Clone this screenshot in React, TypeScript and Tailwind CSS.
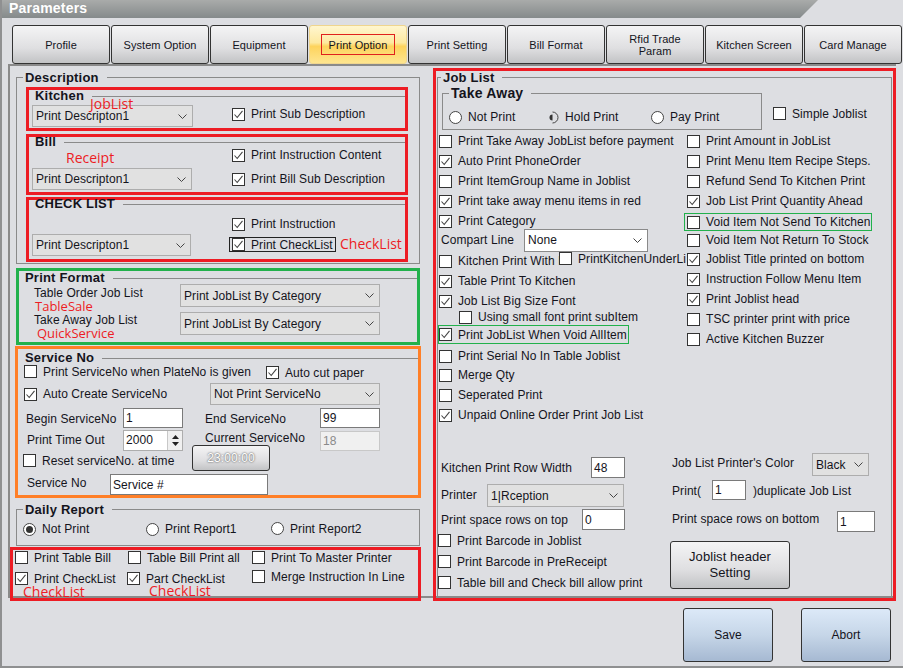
import type { ReactNode } from 'react';

const tabs = ['Profile', 'System Option', 'Equipment', 'Print Option', 'Print Setting', 'Bill Format', 'Rfid Trade Param', 'Kitchen Screen', 'Card Manage'];

const Check = ({ label, checked, className = '' }: { label?: string; checked?: boolean; className?: string }) => (
    <div className={`flex items-center whitespace-nowrap ${className}`}>
        <span className="w-[13px] h-[13px] shrink-0 bg-white border border-[#333] flex items-center justify-center">
            {checked && (
                <svg width="11" height="11" viewBox="0 0 11 11" fill="none">
                    <path d="M1.5 5.5 L4.2 8.5 L9.5 1.8" stroke="#444" strokeWidth="1.1" />
                </svg>
            )}
        </span>
        {label && <span className="ml-[6px]">{label}</span>}
    </div>
);

const Radio = ({ label, checked, className = '' }: { label: string; checked?: boolean; className?: string }) => (
    <div className={`flex items-center whitespace-nowrap ${className}`}>
        <span className="w-[13px] h-[13px] shrink-0 rounded-full bg-white border border-[#444] flex items-center justify-center">
            {checked && <span className="w-[7px] h-[7px] rounded-full bg-[#333]" />}
        </span>
        <span className="ml-[6px]">{label}</span>
    </div>
);

const Chevron = () => (
    <svg width="9" height="5" viewBox="0 0 9 5" fill="none" className="shrink-0">
        <path d="M0.5 0.5 L4.5 4.5 L8.5 0.5" stroke="#444" strokeWidth="1" />
    </svg>
);

const Select = ({ value, className = '', white }: { value: string; className?: string; white?: boolean }) => (
    <div className={`flex items-center justify-between shrink-0 pl-[3px] pr-[5px] border whitespace-nowrap ${white ? 'bg-white border-[#8a8a8a]' : 'bg-[#e1e1e1] border-[#adadad]'} ${className}`}>
        <span>{value}</span>
        <Chevron />
    </div>
);

const Field = ({ value, className = '', disabled }: { value: string; className?: string; disabled?: boolean }) => (
    <div className={`flex items-center shrink-0 pl-[2px] border ${disabled ? 'bg-[#f0f0f0] border-[#c8c8c8] text-[#8a8a8a]' : 'bg-white border-[#7a7a7a]'} ${className}`}>
        {value}
    </div>
);

const Title = ({ text, className = '' }: { text: string; className?: string }) => (
    <div className={`flex items-center h-[10px] ${className}`}>
        <span className="font-bold text-[13px] tracking-[0.2px] whitespace-nowrap">{text}</span>
        <span className="flex-1 h-px bg-[#8a8a8a] ml-[8px]" />
    </div>
);

const Group = ({ title, className = '', legend = 'ml-[6px]', big, children }: { title: string; className?: string; legend?: string; big?: boolean; children: ReactNode }) => (
    <fieldset className={`border border-[#8a8a8a] ${className}`}>
        <legend className={`pl-[2px] pr-[8px] h-[16px] font-bold tracking-[0.2px] ${big ? 'text-[14px] leading-[16px]' : 'text-[13px] leading-[18px]'} ${legend}`}>{title}</legend>
        {children}
    </fieldset>
);

const Note = ({ text, className = '' }: { text: string; className?: string }) => (
    <span className={`absolute leading-[16px] tracking-normal text-[#ed1c24] whitespace-nowrap font-['Open_Sans',sans-serif] font-normal ${className}`}>{text}</span>
);

const Tab = ({ text, active, className = '' }: { text: string; active?: boolean; className?: string }) => (
    <div className={`w-[98px] h-[39px] flex items-center justify-center text-center rounded-[3px] border text-[11px] leading-[12px] ${active ? 'bg-[linear-gradient(#fff6cf,#fde9a0_45%,#fdd35c_55%,#fee58f)] border-[#efd58e]' : 'bg-[linear-gradient(#f4f4f5,#dfdfe1_60%,#c2c3c5)] border-[#333]'} ${className}`}>
        {active ? <span className="px-[7px] h-[21px] flex items-center border border-[#e0201c]">{text}</span> : text}
    </div>
);

const leftRows: { label: string; checked?: boolean }[] = [
    { label: 'Print Take Away JobList before payment' },
    { label: 'Auto Print PhoneOrder', checked: true },
    { label: 'Print ItemGroup Name in Joblist' },
    { label: 'Print take away menu items in red', checked: true },
    { label: 'Print Category', checked: true },
];

const rightRows: { label: string; checked?: boolean; className: string }[] = [
    { label: 'Void Item Not Return To Stock', className: 'h-[20px] -mt-px' },
    { label: 'Joblist Title printed on bottom', checked: true, className: 'h-[20px] -mt-px' },
    { label: 'Instruction Follow Menu Item', checked: true, className: 'h-[20px]' },
    { label: 'Print Joblist head', checked: true, className: 'h-[20px]' },
    { label: 'TSC printer print with price', className: 'h-[20px]' },
    { label: 'Active Kitchen Buzzer', className: 'h-[20px]' },
];

export default function App() {
    return (
        <div className="relative w-[903px] h-[668px] overflow-hidden bg-[#dddee2] text-[12px] leading-[14px] tracking-[0.07px] text-[#14141c] font-['Liberation_Sans',sans-serif]">
            {/* Title bar */}
            <div className="h-[18px] pl-[9px] font-bold text-[14px] tracking-[0.2px] leading-[17px] text-white bg-[linear-gradient(#a9abaa,#858a8b)] [clip-path:polygon(0_0,818px_0,800px_100%,0_100%)]">
                Parameters
            </div>

            {/* Tabs */}
            <div className="flex gap-px ml-[12px] mt-[7px]">
                {tabs.map((tab, i) => (
                    <Tab key={tab} text={tab} active={i === 3} className={i === 6 ? 'px-[20px]' : i === 8 ? 'w-[86px]' : ''} />
                ))}
            </div>

            {/* Main panel */}
            <div className="ml-[8px] w-[888px] h-[534px] border-l-2 border-t-2 border-b-2 border-[#8a8a8a] flex">
                {/* Left column */}
                <div className="w-[412px] shrink-0">
                    <Group title="Description" className="mt-[3px] ml-[6px] w-[404px] pb-px">
                        <div className="relative mt-[2px] ml-[9px] w-[382px] h-[44px] border-[3px] border-[#ed1c24]">
                            <Title text="Kitchen" className="pl-[6px] relative top-px" />
                            <div className="flex mt-[5px] ml-[3px]">
                                <Select value="Print Descripton1" className="w-[161px] h-[22px]" />
                                <Check label="Print Sub Description" checked className="ml-[39px] h-[14px] mt-[2px]" />
                            </div>
                            <Note text="JobList" className="text-[14px] left-[61px] top-[6px]" />
                        </div>
                        <div className="relative mt-[3px] ml-[9px] w-[382px] h-[61px] border-[3px] border-[#ed1c24]">
                            <Title text="Bill" className="pl-[6px]" />
                            <div className="flex ml-[3px]">
                                <Select value="Print Descripton1" className="w-[160px] h-[22px] mt-[21px]" />
                                <div className="ml-[40px] mt-px flex flex-col gap-[10px]">
                                    <Check label="Print Instruction Content" checked className="h-[14px]" />
                                    <Check label="Print Bill Sub Description" checked className="h-[14px]" />
                                </div>
                            </div>
                            <Note text="Receipt" className="text-[14px] left-[37px] top-[13px]" />
                        </div>
                        <div className="relative mt-[2px] ml-[9px] w-[382px] h-[65px] border-[3px] border-[#ed1c24]">
                            <Title text="CHECK LIST" className="pl-[6px] -mt-px" />
                            <div className="flex ml-[3px]">
                                <Select value="Print Descripton1" className="w-[159px] h-[22px] mt-[25px]" />
                                <div className="ml-[41px] mt-[8px] flex flex-col gap-[6px]">
                                    <Check label="Print Instruction" checked className="h-[14px]" />
                                    <Check label="Print CheckList" checked className="h-[15px] w-[107px] -ml-[3px] pl-[2px] border border-[#222]" />
                                </div>
                            </div>
                            <Note text="CheckList" className="text-[14px] left-[311px] top-[36px]" />
                        </div>
                    </Group>

                    <div className="relative mt-[4px] ml-[6px] w-[404px] h-[77px] border-[3px] border-[#22b14c]">
                        <Title text="Print Format" className="pl-[6px] mt-px relative top-px" />
                        <div className="flex mt-[2px]">
                            <span className="ml-[15px] w-[146px] leading-[18px]">Table Order Job List</span>
                            <Select value="Print JobList By Category" className="w-[200px] h-[23px]" />
                        </div>
                        <div className="flex mt-[5px]">
                            <span className="ml-[15px] w-[146px] leading-[16px]">Take Away Job List</span>
                            <Select value="Print JobList By Category" className="w-[200px] h-[23px]" />
                        </div>
                        <Note text="TableSale" className="text-[13px] left-[16px] top-[27px]" />
                        <Note text="QuickService" className="text-[13px] left-[18px] top-[54px]" />
                    </div>

                    <div className="mt-[1px] ml-[5px] w-[406px] h-[152px] border-[3px] border-[#ff7f27]">
                        <Title text="Service No" className="pl-[7px] mt-[2px] relative top-[2px]" />
                        <div className="flex mt-[5px] ml-[6px]">
                            <Check label="Print ServiceNo when PlateNo is given" className="w-[242px] h-[13px] -mt-px" />
                            <Check label="Auto cut paper" checked className="h-[13px]" />
                        </div>
                        <div className="flex items-center mt-[4px] ml-[6px]">
                            <Check label="Auto Create ServiceNo" checked className="w-[186px] h-[13px]" />
                            <Select value="Not Print ServiceNo" className="w-[170px] h-[22px]" />
                        </div>
                        <div className="flex items-center mt-[3px] ml-[8px] h-[20px]">
                            <span className="w-[97px] pt-px">Begin ServiceNo</span>
                            <Field value="1" className="w-[60px] h-[20px]" />
                            <span className="ml-[22px] w-[115px] pt-px">End ServiceNo</span>
                            <Field value="99" className="w-[60px] h-[20px]" />
                        </div>
                        <div className="flex mt-[2px] ml-[9px] h-[21px]">
                            <span className="w-[96px] leading-[20px]">Print Time Out</span>
                            <div className="relative w-[60px] h-[21px] border border-[#adadad] bg-white pl-[2px] leading-[19px]">
                                2000
                                <div className="absolute right-0 top-0 w-[15px] h-[19px] flex flex-col items-center justify-center gap-[3px] bg-[#f0f0f0] border-l border-[#c8c8c8]">
                                    <svg width="7" height="4" viewBox="0 0 7 4"><path d="M3.5 0 L7 4 L0 4 Z" fill="#222" /></svg>
                                    <svg width="7" height="4" viewBox="0 0 7 4"><path d="M0 0 L7 0 L3.5 4 Z" fill="#222" /></svg>
                                </div>
                            </div>
                            <span className="ml-[22px] w-[115px] leading-[16px]">Current ServiceNo</span>
                            <Field value="18" disabled className="w-[60px] h-[20px] mt-px" />
                        </div>
                        <div className="flex -mt-[6px] ml-[5px] h-[26px]">
                            <Check label="Reset serviceNo. at time" className="w-[169px] h-[13px] mt-[9px]" />
                            <div className="w-[78px] h-[26px] flex items-center justify-center rounded-[3px] border border-[#333] text-white [text-shadow:0_0_2px_#222] bg-[linear-gradient(#f4f4f5,#dfdfe1_60%,#c2c3c5)]">23:00:00</div>
                        </div>
                        <div className="flex items-center mt-[3px] ml-[9px] h-[21px]">
                            <span className="w-[83px] -mt-[4px]">Service No</span>
                            <Field value="Service #" className="w-[158px] h-[21px]" />
                        </div>
                    </div>

                    <Group title="Daily Report" className="mt-[3px] ml-[6px] w-[404px] h-[45px]">
                        <div className="flex mt-[5px] ml-[6px]">
                            <Radio label="Not Print" checked className="w-[123px]" />
                            <Radio label="Print Report1" className="w-[125px]" />
                            <Radio label="Print Report2" className="-mt-px" />
                        </div>
                    </Group>

                    <div className="relative mt-px w-[411px] h-[54px] border-[3px] border-[#ed1c24] flex pl-[2px] pt-px">
                        <div className="w-[113px] flex flex-col gap-[8px]">
                            <Check label="Print Table Bill" className="h-[13px]" />
                            <Check label="Print CheckList" checked className="h-[13px]" />
                        </div>
                        <div className="w-[124px] flex flex-col gap-[8px]">
                            <Check label="Table Bill Print all" className="h-[13px]" />
                            <Check label="Part CheckList" checked className="h-[13px] -ml-px" />
                        </div>
                        <div className="flex flex-col gap-[6px]">
                            <Check label="Print To Master Printer" className="h-[13px]" />
                            <Check label="Merge Instruction In Line" className="h-[13px]" />
                        </div>
                        <Note text="CheckList" className="text-[14px] left-[10px] top-[34px]" />
                        <Note text="CheckList" className="text-[14px] left-[136px] top-[33px]" />
                    </div>
                </div>

                {/* Right column */}
                <div className="relative ml-[11px] mt-[2px] w-[463px] h-[533px] shrink-0 border-[3px] border-[#ed1c24]">
                    <Group title="Job List" legend="ml-[3px]" className="-mt-[2px] ml-px w-[455px] h-[528px]">
                        <div className="flex">
                            <Group title="Take Away" big legend="ml-[6px]" className="ml-[4px] w-[320px] h-[45px]">
                                <div className="flex mt-[9px] ml-[6px]">
                                    <Radio label="Not Print" className="w-[97px]" />
                                    <div className="flex items-center w-[105px]">
                                        <svg width="13" height="13" viewBox="0 0 13 13" fill="none" className="shrink-0">
                                            <path d="M6.5 1 A5.5 5.5 0 0 1 6.5 12" stroke="#444" />
                                            <path d="M6.5 3.5 A3 3 0 0 0 6.5 9.5 Z" fill="#333" />
                                        </svg>
                                        <span className="ml-[6px]">Hold Print</span>
                                    </div>
                                    <Radio label="Pay Print" />
                                </div>
                            </Group>
                            <Check label="Simple Joblist" className="ml-[11px] mt-[22px] h-[13px]" />
                        </div>

                        <div className="flex mt-px">
                            <div className="w-[248px] pl-px">
                                {leftRows.map(r => (
                                    <Check key={r.label} label={r.label} checked={r.checked} className="h-[20px]" />
                                ))}
                                <div className="flex items-center h-[22px] -mt-[2px] pl-[2px]">
                                    <span className="w-[83px]">Compart Line</span>
                                    <Select white value="None" className="w-[124px] h-[23px]" />
                                </div>
                                <div className="relative">
                                    <Check label="Kitchen Print With I" className="h-[20px]" />
                                    {/* this one sits on top of the label beside it */}
                                    <Check label="PrintKitchenUnderLine" className="absolute left-[120px] top-px w-[127px] h-[13px] overflow-hidden" />
                                </div>
                                <Check label="Table Print To Kitchen" checked className="h-[20px]" />
                                <Check label="Job List Big Size Font" checked className="h-[20px]" />
                                <Check label="Using small font print subItem" className="h-[12px] ml-[20px]" />
                                <Check label="Print JobList When Void AllItem" checked className="h-[19px] w-[191px] mt-[2px] -ml-px border border-[#22b14c]" />
                                <Check label="Print Serial No In Table Joblist" className="h-[20px] mt-[2px]" />
                                <Check label="Merge Qty" className="h-[20px] -mt-px" />
                                <Check label="Seperated Print" className="h-[20px]" />
                                <Check label="Unpaid Online Order Print Job List" checked className="h-[20px]" />
                            </div>
                            <div className="pl-px">
                                <Check label="Print Amount in JobList" className="h-[20px]" />
                                <Check label="Print Menu Item Recipe Steps." className="h-[20px]" />
                                <Check label="Refund Send To Kitchen Print" className="h-[20px]" />
                                <Check label="Job List Print Quantity Ahead" checked className="h-[20px]" />
                                <Check label="Void Item Not Send To Kitchen" className="h-[18px] w-[188px] -ml-[3px] pl-[2px] border border-[#22b14c] mt-[2px]" />
                                {rightRows.map(r => (
                                    <Check key={r.label} label={r.label} checked={r.checked} className={r.className} />
                                ))}
                            </div>
                        </div>

                        <div className="flex mt-[28px]">
                            <div className="w-[231px] pt-[4px]">
                                <div className="flex items-center h-[21px] pl-[3px]">
                                    <span className="w-[150px]">Kitchen Print Row Width</span>
                                    <Field value="48" className="w-[34px] h-[21px]" />
                                </div>
                                <div className="flex items-center h-[23px] mt-[6px] pl-[3px]">
                                    <span className="w-[46px] -mt-px">Printer</span>
                                    <Select value="1|Rception" className="w-[137px] h-[23px]" />
                                </div>
                                <div className="flex items-center h-[21px] mt-[2px] pl-[3px]">
                                    <span className="w-[141px] pt-px">Print space rows on top</span>
                                    <Field value="0" className="w-[43px] h-[21px]" />
                                </div>
                                <Check label="Print Barcode in Joblist" className="h-[21px]" />
                                <Check label="Print Barcode in PreReceipt" className="h-[21px]" />
                                <Check label="Table bill and Check bill allow print" className="h-[21px]" />
                            </div>
                            <div className="ml-[3px]">
                                <div className="flex items-center h-[23px]">
                                    <span className="w-[140px] -mt-[3px]">Job List Printer&apos;s Color</span>
                                    <Select value="Black" className="w-[57px] h-[23px]" />
                                </div>
                                <div className="flex items-center h-[20px] mt-[4px]">
                                    <span className="w-[40px] pt-px">Print(</span>
                                    <Field value="1" className="w-[34px] h-[20px]" />
                                    <span className="ml-[7px] pt-px">)duplicate Job List</span>
                                </div>
                                <div className="flex items-center h-[21px] mt-[11px]">
                                    <span className="w-[165px] -mt-[5px]">Print space rows on bottom</span>
                                    <Field value="1" className="w-[38px] h-[21px]" />
                                </div>
                                <div className="w-[120px] h-[48px] mt-[9px] -ml-[2px] flex items-center justify-center text-center text-[13px] leading-[16px] rounded-[3px] border border-[#333] bg-[linear-gradient(#f4f4f5,#dfdfe1_60%,#c2c3c5)]">
                                    Joblist header<br />Setting
                                </div>
                            </div>
                        </div>
                    </Group>
                </div>
            </div>

            {/* Save / Abort */}
            <div className="flex justify-end gap-[28px] mt-[10px] pr-[12px]">
                <div className="w-[90px] h-[54px] flex items-center justify-center rounded-[3px] border border-[#333] bg-[linear-gradient(#dce9f8,#c6d6e8_50%,#a6b9d2)]">Save</div>
                <div className="w-[90px] h-[54px] flex items-center justify-center rounded-[3px] border border-[#333] bg-[linear-gradient(#dce9f8,#c6d6e8_50%,#a6b9d2)]">Abort</div>
            </div>

            {/* Window frame */}
            <div className="absolute inset-0 pointer-events-none border-l-2 border-b-2 border-[#8f9091]" />
        </div>
    );
}
